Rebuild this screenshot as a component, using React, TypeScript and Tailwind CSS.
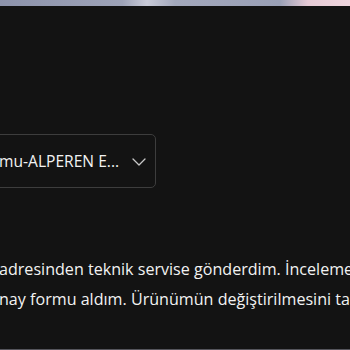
import React from "react";

const font = { fontFamily: '"Open Sans", "Noto Sans", sans-serif' };

const ChevronDown: React.FC = () => (
  <svg width="14" height="8" viewBox="0 0 14 8" fill="none" className="mt-[2px]">
    <path d="M1 1l6 6 6-6" stroke="#c8c8c8" strokeWidth="1.3" strokeLinecap="round" strokeLinejoin="round" />
  </svg>
);

const App: React.FC = () => {
  return (
    <div
      className="w-[350px] h-[350px] overflow-hidden bg-[#131313] flex flex-col text-[#f2f2f2]"
      style={font}
    >
      {/* strip of the picture above */}
      <div className="h-[6px] shrink-0 bg-[linear-gradient(90deg,#8d93ab_0%,#9ea3b8_35%,#c9cbd8_42%,#a3a8bc_50%,#9aa0b6_80%,#e6cbd6_88%,#efd6de_100%)]" />

      <div className="mt-[128px] flex">
        <div className="-ml-[12px] w-[168px] h-[54px] rounded-[5px] border border-[#3d3d3d] flex items-center justify-between pl-[10px] pr-[9px]">
          <span className="text-[15.6px] whitespace-nowrap pt-[1px]">mu-ALPEREN E...</span>
          <ChevronDown />
        </div>
      </div>

      <div className="mt-[66px] text-[16.1px] leading-[30px] whitespace-nowrap -ml-[1px]">
        <div>adresinden teknik servise gönderdim. İnceleme sonucunda</div>
        <div>nay formu aldım. Ürünümün değiştirilmesini talep ediyorum.</div>
      </div>

      <div className="flex-1" />
      <div className="h-[1px] shrink-0 bg-[#55555c]" />
    </div>
  );
};

export default App;
